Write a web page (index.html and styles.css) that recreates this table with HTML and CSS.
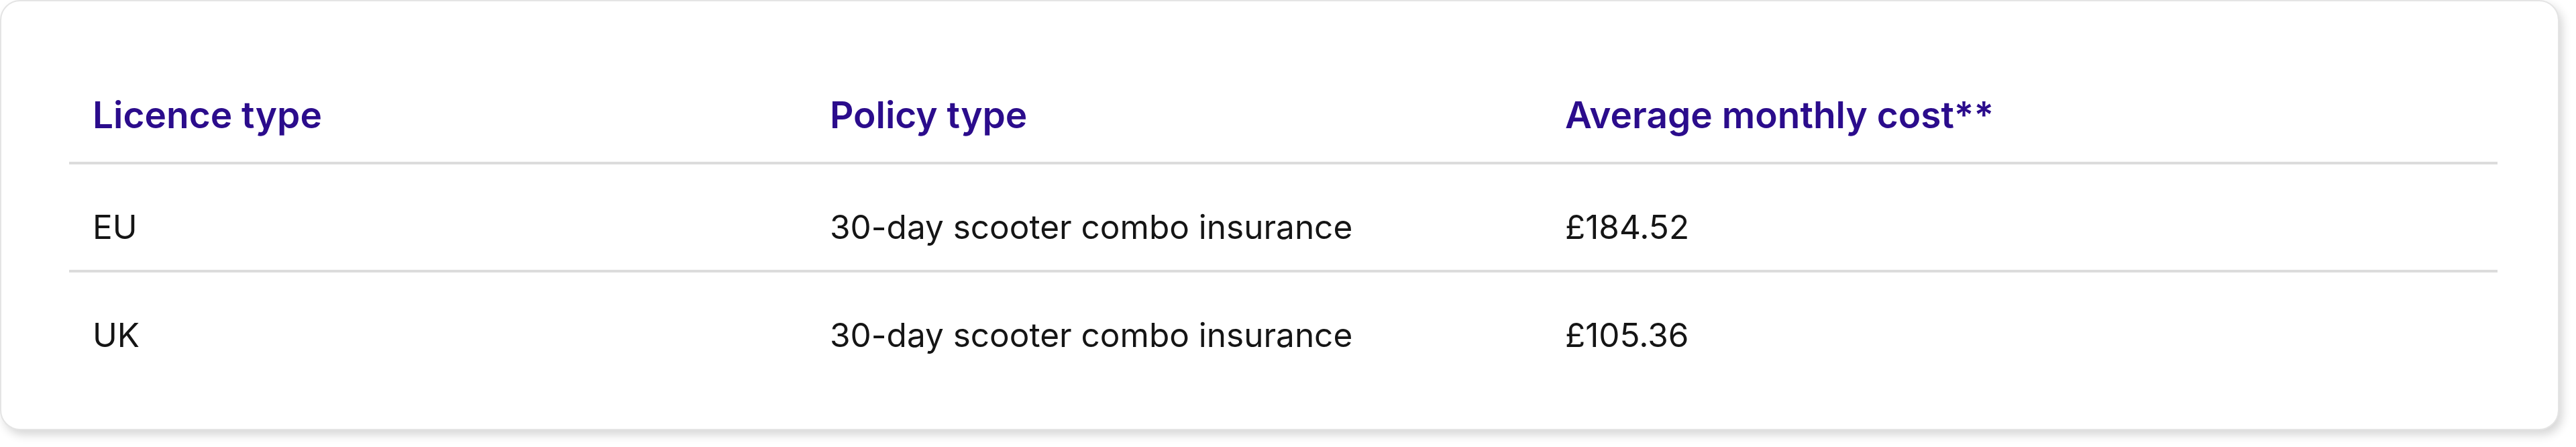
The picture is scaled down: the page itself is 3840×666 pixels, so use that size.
FILE: index.html
```html
<!DOCTYPE html>
<html lang="en">
<head>
<meta charset="utf-8">
<title>Scooter insurance costs</title>
<link rel="stylesheet" href="styles.css">
</head>
<body>
<div class="card">
  <table class="cost-table">
    <colgroup>
      <col class="col-licence">
      <col class="col-policy">
      <col class="col-cost">
    </colgroup>
    <thead>
      <tr>
        <th>Licence type</th>
        <th>Policy type</th>
        <th>Average monthly cost**</th>
      </tr>
    </thead>
    <tbody>
      <tr>
        <td>EU</td>
        <td>30-day scooter combo insurance</td>
        <td>£184.52</td>
      </tr>
      <tr>
        <td>UK</td>
        <td>30-day scooter combo insurance</td>
        <td>£105.36</td>
      </tr>
    </tbody>
  </table>
</div>
</body>
</html>
```
FILE: styles.css
```css
html, body {
  margin: 0;
  padding: 0;
  background: #ffffff;
}

body {
  font-family: Inter, "Noto Sans", "Liberation Sans", sans-serif;
  width: 3840px;
  height: 666px;
  overflow: hidden;
}

.card {
  box-sizing: border-box;
  width: 3815px;
  height: 641px;
  background: #ffffff;
  border: 2px solid #e4e4e4;
  border-radius: 30px;
  box-shadow: 5px 7px 14px rgba(0, 0, 0, 0.16);
  padding: 98px 90px 0 101px;
}

.cost-table {
  width: 3620px;
  border-collapse: collapse;
  table-layout: fixed;
}

.col-licence { width: 1099px; }
.col-policy { width: 1096px; }
.col-cost { width: auto; }

.cost-table th {
  text-align: left;
  font-size: 55px;
  line-height: 66px;
  font-weight: 600;
  color: #2b0c8c;
  padding: 38px 35px 37px;
  border-bottom: 4px solid #dcdcdc;
}

.cost-table td {
  font-size: 49.5px;
  line-height: 60px;
  font-weight: 400;
  color: #151515;
  padding: 63px 35px 34px;
}

.cost-table tbody tr:not(:last-child) td {
  border-bottom: 4px solid #dcdcdc;
}
```
